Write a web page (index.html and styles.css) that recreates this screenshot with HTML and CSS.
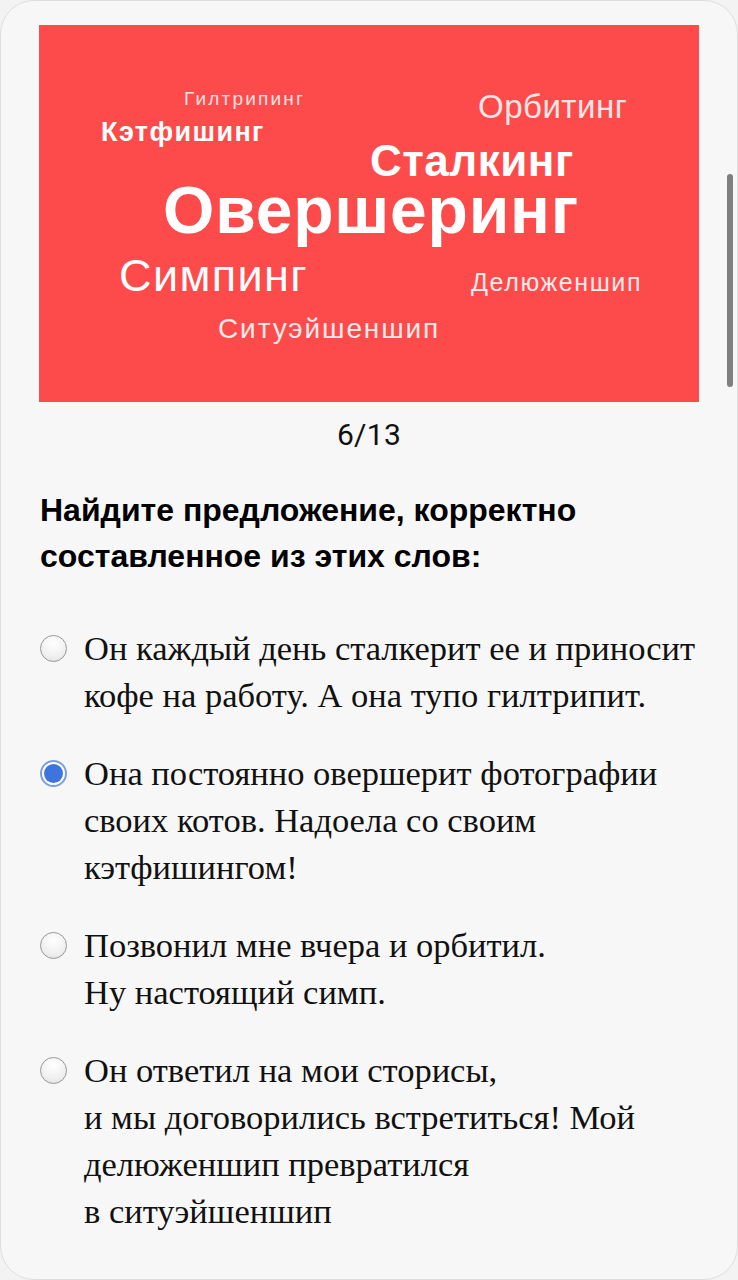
FILE: index.html
```html
<!DOCTYPE html>
<html lang="ru">
<head>
<meta charset="utf-8">
<link rel="stylesheet" href="styles.css">
</head>
<body>
<div class="frame">
  <div class="cloud">
    <span class="w w-gilt">Гилтрипинг</span>
    <span class="w w-cat">Кэтфишинг</span>
    <span class="w w-orb">Орбитинг</span>
    <span class="w w-stalk">Сталкинг</span>
    <span class="w w-over">Овершеринг</span>
    <span class="w w-simp">Симпинг</span>
    <span class="w w-del">Делюженшип</span>
    <span class="w w-sit">Ситуэйшеншип</span>
  </div>
  <div class="counter">6/13</div>
  <h2 class="question">Найдите предложение, корректно<br>составленное из этих слов:</h2>
  <div class="options">
    <label class="option"><span class="radio"></span><span class="otext">Он каждый день сталкерит ее и приносит<br>кофе на работу. А она тупо гилтрипит.</span></label>
    <label class="option"><span class="radio checked"></span><span class="otext">Она постоянно овершерит фотографии<br>своих котов. Надоела со своим<br>кэтфишингом!</span></label>
    <label class="option"><span class="radio"></span><span class="otext">Позвонил мне вчера и орбитил.<br>Ну настоящий симп.</span></label>
    <label class="option"><span class="radio"></span><span class="otext">Он ответил на мои сторисы,<br>и мы договорились встретиться! Мой<br>делюженшип превратился<br>в ситуэйшеншип</span></label>
  </div>
  <div class="scrollbar"></div>
</div>
</body>
</html>
```
FILE: styles.css
```css
html, body {
  margin: 0;
  padding: 0;
  background: #f3f3f3;
}
.frame {
  position: relative;
  box-sizing: border-box;
  width: 738px;
  height: 1280px;
  border: 1px solid #dedede;
  border-radius: 34px;
  background: #f7f7f7;
  padding: 24px 38px 0;
  overflow: hidden;
}
.cloud {
  position: relative;
  height: 377px;
  background: #fd4a4a;
  font-family: "Liberation Sans", Arial, sans-serif;
  color: #fff;
}
.w {
  position: absolute;
  white-space: nowrap;
  line-height: 0.85;
}
.w-gilt { left: 145px; top: 66px; font-size: 19px; letter-spacing: 2.2px; color: #ffe2e2; }
.w-cat { left: 62px; top: 96px; font-size: 27px; letter-spacing: 1.4px; font-weight: bold; }
.w-orb { left: 439px; top: 68px; font-size: 33px; letter-spacing: 0.5px; font-weight: 300; color: #ffe6e6; }
.w-stalk { left: 331px; top: 117px; font-size: 44px; letter-spacing: 0.5px; font-weight: bold; }
.w-over { left: 124px; top: 157px; font-size: 66px; letter-spacing: 0.8px; font-weight: bold; }
.w-simp { left: 80px; top: 232px; font-size: 45px; letter-spacing: 1.4px; }
.w-del { left: 432px; top: 247px; font-size: 25px; letter-spacing: 1.6px; color: #ffeaea; }
.w-sit { left: 179px; top: 292px; font-size: 28px; letter-spacing: 1.9px; color: #ffeaea; }
.counter {
  margin-top: 16px;
  text-align: center;
  font-family: Roboto, "Liberation Sans", sans-serif;
  font-size: 30px;
  line-height: 34px;
  letter-spacing: 0.3px;
  color: #111;
}
.question {
  margin: 35px 0 0 1px;
  font-family: "Liberation Sans", Arial, sans-serif;
  font-weight: bold;
  font-size: 32px;
  line-height: 46px;
  color: #000;
}
.options {
  margin-top: 46px;
  display: flex;
  flex-direction: column;
  gap: 31px;
}
.option {
  display: flex;
  align-items: flex-start;
  gap: 17px;
  padding-left: 1px;
}
.radio {
  flex: none;
  box-sizing: border-box;
  width: 27px;
  height: 27px;
  margin-top: 10px;
  border-radius: 50%;
  border: 1.5px solid #979797;
  background: radial-gradient(circle at 50% 30%, #ffffff 0%, #f0f0f0 60%, #dcdcdc 100%);
}
.radio.checked {
  border: 2px solid #7a9ee6;
  background: #fff;
  position: relative;
}
.radio.checked::after {
  content: "";
  position: absolute;
  left: 2px;
  top: 2px;
  right: 2px;
  bottom: 2px;
  border-radius: 50%;
  background: #3d74de;
}
.otext {
  font-family: "Liberation Serif", "Times New Roman", serif;
  font-size: 34.5px;
  line-height: 47px;
  color: #111;
}
.scrollbar {
  position: absolute;
  right: 4px;
  top: 173px;
  width: 6px;
  height: 213px;
  border-radius: 3px;
  background: #7f7f7f;
}
```
